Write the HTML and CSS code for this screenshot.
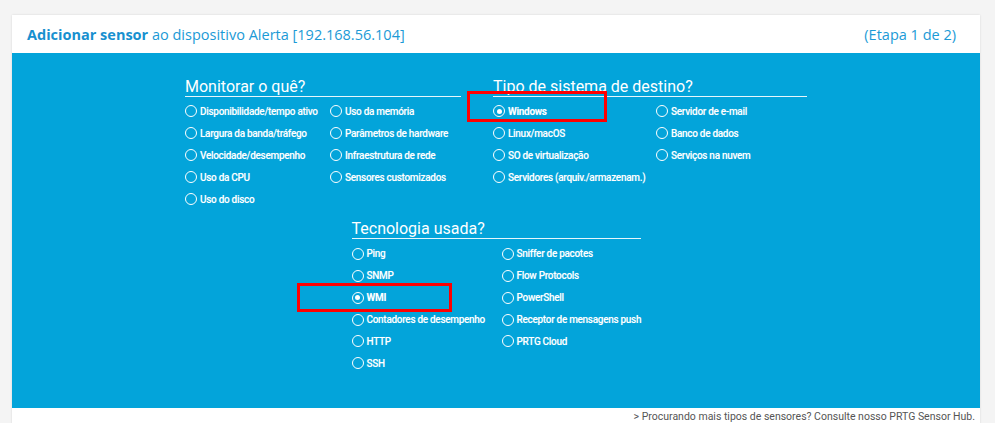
FILE: index.html
```html
<!DOCTYPE html>
<html lang="pt">
<head>
<meta charset="utf-8">
<title>Adicionar sensor</title>
<link rel="stylesheet" href="styles.css">
</head>
<body>
<div class="card">
  <div class="card-header">
    <div class="title"><b>Adicionar sensor</b> ao dispositivo Alerta [192.168.56.104]</div>
    <div class="step">(Etapa 1 de 2)</div>
  </div>
  <div class="panel">
    <div class="row-top">
      <div class="group g-monitor">
        <h2 class="heading">Monitorar o quê?</h2>
        <div class="options">
          <div class="opt"><span class="radio"></span>Disponibilidade/tempo ativo</div>
          <div class="opt"><span class="radio"></span>Uso da memória</div>
          <div class="opt"><span class="radio"></span>Largura da banda/tráfego</div>
          <div class="opt"><span class="radio"></span>Parâmetros de hardware</div>
          <div class="opt"><span class="radio"></span>Velocidade/desempenho</div>
          <div class="opt"><span class="radio"></span>Infraestrutura de rede</div>
          <div class="opt"><span class="radio"></span>Uso da CPU</div>
          <div class="opt"><span class="radio"></span>Sensores customizados</div>
          <div class="opt"><span class="radio"></span>Uso do disco</div>
        </div>
      </div>
      <div class="group g-tipo">
        <h2 class="heading">Tipo de sistema de destino?</h2>
        <div class="options">
          <div class="opt checked"><span class="radio"></span>Windows</div>
          <div class="opt"><span class="radio"></span>Servidor de e-mail</div>
          <div class="opt"><span class="radio"></span>Linux/macOS</div>
          <div class="opt"><span class="radio"></span>Banco de dados</div>
          <div class="opt"><span class="radio"></span>SO de virtualização</div>
          <div class="opt"><span class="radio"></span>Serviços na nuvem</div>
          <div class="opt"><span class="radio"></span>Servidores (arquiv./armazenam.)</div>
        </div>
      </div>
    </div>
    <div class="row-bottom">
      <div class="group g-tec">
        <h2 class="heading">Tecnologia usada?</h2>
        <div class="options">
          <div class="opt"><span class="radio"></span>Ping</div>
          <div class="opt"><span class="radio"></span>Sniffer de pacotes</div>
          <div class="opt"><span class="radio"></span>SNMP</div>
          <div class="opt"><span class="radio"></span>Flow Protocols</div>
          <div class="opt checked"><span class="radio"></span>WMI</div>
          <div class="opt"><span class="radio"></span>PowerShell</div>
          <div class="opt"><span class="radio"></span>Contadores de desempenho</div>
          <div class="opt"><span class="radio"></span>Receptor de mensagens push</div>
          <div class="opt"><span class="radio"></span>HTTP</div>
          <div class="opt"><span class="radio"></span>PRTG Cloud</div>
          <div class="opt"><span class="radio"></span>SSH</div>
        </div>
      </div>
    </div>
    <div class="mark mark-windows"></div>
    <div class="mark mark-wmi"></div>
  </div>
  <div class="card-footer">
    <div class="hub">&gt; Procurando mais tipos de sensores? Consulte nosso PRTG Sensor Hub.</div>
    <div class="back">‹ Cancelar seleção</div>
  </div>
</div>
</body>
</html>
```
FILE: styles.css
```css
html, body {
  margin: 0;
  padding: 0;
}
body {
  background: #f4f4f4;
  font-family: Roboto, "Liberation Sans", sans-serif;
  overflow: hidden;
}
.card {
  margin: 15px 0 0 12px;
  width: 968px;
  background: #fff;
  box-shadow: 0 0 2px rgba(0,0,0,0.12);
}
.card-header {
  height: 38px;
  display: flex;
  align-items: center;
  justify-content: space-between;
  padding: 0 24px 0 15px;
  font-family: "Open Sans", sans-serif;
  font-size: 14.5px;
  color: #1b9ad6;
}
.card-header b {
  font-weight: 700;
  color: #1790cf;
}
.panel {
  position: relative;
  height: 355px;
  background: #03a4da;
  padding-top: 24px;
  box-sizing: border-box;
  color: #fff;
}
.row-top {
  display: flex;
  justify-content: center;
  gap: 32px;
}
.row-bottom {
  display: flex;
  justify-content: center;
  margin-top: 9px;
}
.g-monitor { width: 276px; }
.g-tipo { width: 314px; }
.g-tec { width: 289px; }
.heading {
  margin: 0;
  font-size: 16px;
  font-weight: 400;
  line-height: 19px;
  border-bottom: 1px solid rgba(255,255,255,0.9);
  color: #fff;
}
.options {
  display: grid;
  grid-auto-rows: 22.1px;
  margin-top: 3px;
}
.g-monitor .options { grid-template-columns: 145px 1fr; }
.g-tipo .options { grid-template-columns: 163px 1fr; }
.g-tec .options {
  grid-template-columns: 150px 1fr;
  grid-auto-rows: 21.9px;
  margin-top: 3.5px;
}
.opt {
  display: flex;
  align-items: center;
  font-size: 10px;
  font-weight: 500;
  letter-spacing: -0.3px;
  white-space: nowrap;
  text-shadow: 0 0 1px rgba(255,255,255,0.3);
}
.radio {
  width: 12px;
  height: 12px;
  box-sizing: border-box;
  border: 1.5px solid #fff;
  border-radius: 50%;
  margin-right: 3px;
  flex: none;
  display: flex;
  align-items: center;
  justify-content: center;
}
.checked {
  font-weight: 700;
}
.checked .radio::after {
  content: "";
  width: 5px;
  height: 5px;
  border-radius: 50%;
  background: #fff;
}
.mark {
  position: absolute;
  border: 3.5px solid #f00;
  box-sizing: border-box;
}
.mark-windows {
  left: 455px;
  top: 38px;
  width: 140px;
  height: 31px;
}
.mark-wmi {
  left: 285px;
  top: 230px;
  width: 155px;
  height: 29px;
}
.card-footer {
  height: 30px;
  padding: 3px 5px 0 21px;
  color: #555;
}
.hub {
  text-align: right;
  font-size: 10.5px;
  line-height: 12px;
}
.back {
  font-size: 11px;
  line-height: 13px;
  color: #777;
}
```
